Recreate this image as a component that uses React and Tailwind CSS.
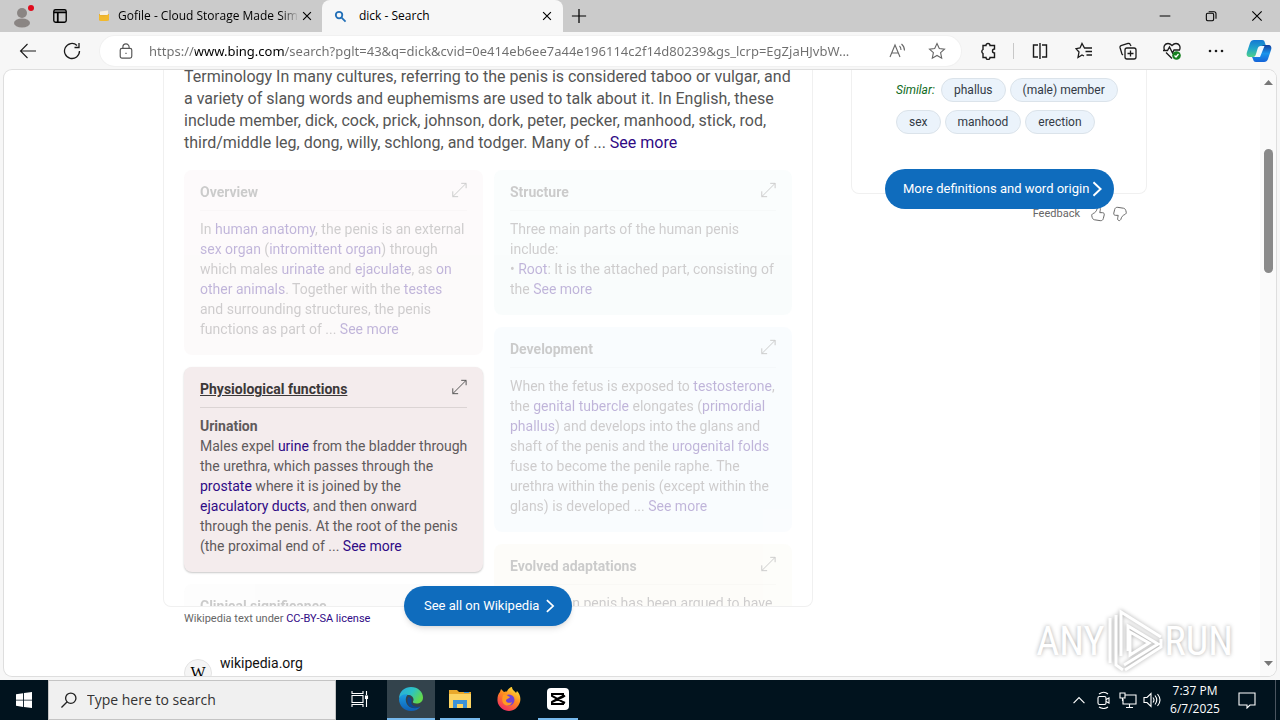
import React from "react";

const ui = "font-['Open_Sans','Noto_Sans',sans-serif]";

function Svg({ size = 18, className = "", children, ...rest }) {
  return (
    <svg width={size} height={size} viewBox="0 0 18 18" fill="none" stroke="currentColor" strokeWidth="1.1" aria-hidden="true" className={`shrink-0 ${className}`} {...rest}>
      {children}
    </svg>
  );
}

const Close = () => <Svg size={14} strokeWidth="1.5"><path d="M4 4l10 10M14 4L4 14" /></Svg>;

function IconButton({ label, children, className = "w-11" }) {
  return (
    <button aria-label={label} className={`flex h-8 shrink-0 items-center justify-center ${className}`}>
      {children}
    </button>
  );
}

function TabStrip() {
  return (
    <header className="flex h-8 shrink-0 bg-[#cbcbcb] text-black">
      <IconButton label="Profile">
        <Svg size={24} viewBox="0 0 24 24" stroke="none">
          <circle cx="12" cy="9" r="5" fill="#8a8583" />
          <ellipse cx="12" cy="19" rx="8" ry="4.500" fill="#8a8583" />
          <circle cx="21" cy="4" r="3" fill="#e00b1c" />
        </Svg>
      </IconButton>
      <IconButton label="Tab actions" className="w-8">
        <Svg size={16} strokeWidth="1.5"><rect x="2" y="2" width="14" height="14" rx="2" /><path d="M2 5h14M6.500 5v11" strokeWidth="2" /></Svg>
      </IconButton>
      <div role="tablist" className={`flex text-xs ${ui}`}>
        <div role="tab" aria-selected="false" className="ml-5 flex w-[226px] items-center pr-2">
          <Svg size={12} viewBox="0 0 12 12" stroke="none" className="ml-[2px]">
            <path d="M1 4h10v6.500H1z" fill="#e8b030" /><path d="M2 1.500l8-1V5H2z" fill="#f5efe2" /><path d="M1 5.500l5 1 5-2.500v5.500l-2 1.500H2.500L1 9z" fill="#f2b92c" />
          </Svg>
          <span className="ml-2 flex-1 overflow-hidden whitespace-nowrap mask-r-from-90%">Gofile - Cloud Storage Made Sim</span>
          <button aria-label="Close Gofile tab" className="ml-px"><Close /></button>
        </div>
        <div role="tab" aria-selected="true" className="flex w-[241px] items-center rounded-t-lg bg-[#f7f7f7] pr-[9px] pl-3">
          <Svg size={13} strokeWidth="2.500" className="text-[#2370b8]"><circle cx="7" cy="7" r="4.500" /><path d="M10.500 10.500l5.500 5.500" /></Svg>
          <span className="ml-3 flex-1">dick - Search</span>
          <button aria-label="Close search tab"><Close /></button>
        </div>
      </div>
      <IconButton label="New tab" className="w-8"><Svg size={16} strokeWidth="1.400"><path d="M9 1v16M1 9h16" /></Svg></IconButton>
      <div className="flex-1" />
      <IconButton label="Minimize" className="w-[46px]"><Svg size={12} strokeWidth="1.500"><path d="M1 9h16" /></Svg></IconButton>
      <IconButton label="Restore" className="w-[46px]">
        <Svg size={12} strokeWidth="1.600"><rect x="2" y="5" width="11" height="11" rx="2" /><path d="M5.500 2.500h8a3 3 0 0 1 3 3v7.500" /></Svg>
      </IconButton>
      <IconButton label="Close window" className="w-[46px]"><Svg size={12} strokeWidth="1.700"><path d="M2 2l14 14M16 2L2 16" /></Svg></IconButton>
    </header>
  );
}

const url = "https://www.bing.com/search?pglt=43&q=dick&cvid=0e414eb6ee7a44e196114c2f14d80239&gs_lcrp=EgZjaHJvbW...";

function Toolbar() {
  return (
    <nav className="flex h-[38px] shrink-0 items-center bg-[#f7f7f7] pl-[6px] text-[#1b1b1b]">
      <IconButton label="Back"><Svg><path d="M17 9H1.500M8.500 2L1.500 9l7 7" /></Svg></IconButton>
      <IconButton label="Refresh"><Svg strokeWidth="1.300"><path d="M16.500 9A7.500 7.500 0 1 1 14 3.400M16 1v4.500h-4.500" /></Svg></IconButton>
      <div className="ml-[6px] flex h-[30px] min-w-0 flex-1 items-center rounded-full bg-white pr-1 pl-[18px] ring-1 ring-[#f1f1f1]">
        <Svg size={16} className="text-[#555]" strokeWidth="1.300"><rect x="2.500" y="6" width="13" height="11" rx="2" /><path d="M5.500 6V4.500a3.500 3.500 0 0 1 7 0V6M9 11v1.500" /></Svg>
        <input
          aria-label="Address"
          readOnly
          value={url}
          className="ml-[15px] h-6 min-w-0 flex-1 bg-[linear-gradient(90deg,#6e6e6e_46px,#000_46px,#000_136px,#6e6e6e_136px)] bg-clip-text font-['Noto_Sans',sans-serif] text-[13px] text-transparent outline-none"
        />
        <IconButton label="Read aloud" className="w-10">
          <Svg className="text-[#666]"><path d="M2 15L7 3l5 12M4 11h6M11.500 4q1.500 1.500 1.500 4M13.500 2q3 2.500 3 6.500" /></Svg>
        </IconButton>
        <IconButton label="Add to favorites" className="w-10">
          <Svg className="text-[#666]"><path d="M9 1.500l2.300 5 5.200.6-3.900 3.600 1.100 5.500L9 13.500l-4.700 2.700 1.100-5.500L1.500 7.100l5.200-.6z" /></Svg>
        </IconButton>
      </div>
      <div className="flex items-center pl-2">
        <IconButton label="Extensions" className="w-10">
          <Svg strokeWidth="1.400"><path d="M6 3.500a2 2 0 0 1 4 0h4.500V7a2 2 0 0 0 0 4v4.500H10a2 2 0 0 1-4 0H3V11.500a2.300 2.300 0 0 1 0-4V3.500z" /></Svg>
        </IconButton>
        <span className="mx-1 h-4 w-px bg-[#c8c8c8]" />
        <IconButton label="Split screen"><Svg strokeWidth="1.400"><path d="M7 3H2.500v12H7M11 3h4.500v12H11M9 1v16" /></Svg></IconButton>
        <IconButton label="Favorites">
          <Svg strokeWidth="1.300"><path d="M12 6H9.500L7 1.500 5 6l-4 .700 3 3.300-1 5.500L7 13l2 1M11 6h6M10.500 9.500H17M11.500 13H17" /></Svg>
        </IconButton>
        <IconButton label="Collections">
          <Svg strokeWidth="1.300"><rect x="6" y="6" width="11" height="11" rx="2" /><path d="M11.500 8.500v6M8.500 11.500h6M4 13l-1-.8L1 5.500C.8 4.500 1.300 4 2 3.700L9 1.500c1-.2 1.800 0 2.200 1L12 4" /></Svg>
        </IconButton>
        <IconButton label="Browser essentials">
          <Svg strokeWidth="1.300"><path d="M1.500 8C0 4.500 2 1.500 5 1.500c2 0 3 1 4 2 1-1 2-2 4-2 3 0 5 3 3.500 6.500M0 8.500h4.500L6.500 5l3 6 1.500-3h6M3 10.500l6 6" /><circle cx="13.500" cy="13.500" r="4.300" fill="#16801f" stroke="none" /><path d="M11.500 13.500l1.500 1.500 2.500-3" stroke="#fff" /></Svg>
        </IconButton>
        <IconButton label="Settings and more"><Svg stroke="none" fill="currentColor"><circle cx="3" cy="9" r="1.300" /><circle cx="9" cy="9" r="1.300" /><circle cx="15" cy="9" r="1.300" /></Svg></IconButton>
        <IconButton label="Copilot" className="w-[42px]">
          <Svg size={26} viewBox="0 0 26 26" stroke="none">
            <defs>
              <linearGradient id="cpa" x1="0" y1="0" x2="0" y2="1"><stop offset="0" stopColor="#1478d4" /><stop offset=".5" stopColor="#22a5c9" /><stop offset="1" stopColor="#4fd08a" /></linearGradient>
              <linearGradient id="cpb" x1="0" y1="0" x2="0" y2="1"><stop offset="0" stopColor="#123f9e" /><stop offset=".5" stopColor="#1a94ec" /><stop offset="1" stopColor="#1463d8" /></linearGradient>
            </defs>
            <path d="M8 2h8c2 0 2.500 1 3 3l1 3h-5c-2 0-3 1-3.500 3l-1.500 5c-.5 2-1.500 3-3 3H4c-3 0-4-2-3-5l3-9c.7-2 2-3 4-3z" fill="url(#cpa)" />
            <path d="M18 24h-8c-2 0-2.500-1-3-3l-1-2h4c2 0 3-1 3.500-3L15 10c.5-2 1.500-3 3-3h4c3 0 4 2 3 5l-3 9c-.7 2-2 3-4 3z" fill="url(#cpb)" />
            <path d="M14.500 8h4l-4.500 11H9.500c1 0 1.800-1 2-2z" fill="#eef7ff" />
          </Svg>
        </IconButton>
      </div>
    </nav>
  );
}

const L = ({ children }) => <a href="#" className="text-[#2f0a85]">{children}</a>;

function Lines({ lines }) {
  return lines.map((line, i) => <React.Fragment key={i}>{line}<br /></React.Fragment>);
}

function Topic({ title, tone, active, lines }) {
  return (
    <article className={`rounded-lg px-4 pt-3 pb-4 text-sm leading-5 whitespace-nowrap text-[#5f5a5c] ${tone} ${active ? "shadow-[0_1px_2px_rgba(0,0,0,0.22)]" : "opacity-30"}`}>
      <div className={`flex justify-between border-b pb-2 ${active ? "border-black/10" : "border-black/5"}`}>
        <h3 className={`font-bold ${active ? "text-[#3c3838] underline" : "text-[#555]"}`}>{title}</h3>
        <button aria-label={`Expand ${title}`} className="flex h-4 items-center text-[#555]">
          <Svg size={16}><path d="M11.500 1.500h5.500v5.500M2 10.500v6h6M17 1.500l-15 15" /></Svg>
        </button>
      </div>
      <p className="pt-2"><Lines lines={lines} /></p>
    </article>
  );
}

const overview = [
  <>In <L>human anatomy</L>, the penis is an external</>,
  <><L>sex organ</L> (<L>intromittent organ</L>) through</>,
  <>which males <L>urinate</L> and <L>ejaculate</L>, as <L>on</L></>,
  <><L>other animals</L>. Together with the <L>testes</L></>,
  "and surrounding structures, the penis",
  <>functions as part of ... <L>See more</L></>,
];
const physiology = [
  <b>Urination</b>,
  <>Males expel <L>urine</L> from the bladder through</>,
  "the urethra, which passes through the",
  <><L>prostate</L> where it is joined by the</>,
  <><L>ejaculatory ducts</L>, and then onward</>,
  "through the penis. At the root of the penis",
  <>(the proximal end of ... <L>See more</L></>,
];
const structure = [
  "Three main parts of the human penis",
  "include:",
  <>• <L>Root</L>: It is the attached part, consisting of</>,
  <>the <L>See more</L></>,
];
const development = [
  <>When the fetus is exposed to <L>testosterone</L>,</>,
  <>the <L>genital tubercle</L> elongates (<L>primordial</L></>,
  <><L>phallus</L>) and develops into the glans and</>,
  <>shaft of the penis and the <L>urogenital folds</L></>,
  "fuse to become the penile raphe. The",
  "urethra within the penis (except within the",
  <>glans) is developed ... <L>See more</L></>,
];

const Chevron = ({ size = 14 }) => <Svg size={size} strokeWidth="2.200"><path d="M5 1.500L13 9l-8 7.500" /></Svg>;

function WikipediaAnswer() {
  return (
    <section className="w-[650px] shrink-0">
      <div className="relative">
        <div className="h-[537px] overflow-hidden rounded-b-lg border border-t-0 border-[#f0f0f0] px-5">
          <p className="-mt-1 text-base leading-[22px] whitespace-nowrap text-[#555]">
            <Lines lines={[
              "Terminology In many cultures, referring to the penis is considered taboo or vulgar, and",
              "a variety of slang words and euphemisms are used to talk about it. In English, these",
              "include member, dick, cock, prick, johnson, dork, peter, pecker, manhood, stick, rod,",
              <>third/middle leg, dong, willy, schlong, and todger. Many of ... <L>See more</L></>,
            ]} />
          </p>
          <div className="mt-4 grid grid-cols-2 items-start gap-3">
            <div className="grid gap-3">
              <Topic title="Overview" tone="bg-[#f8eff1]" lines={overview} />
              <Topic title="Physiological functions" tone="bg-[#f4eced]" active lines={physiology} />
              <Topic title="Clinical significance" tone="bg-[#f8f8f8]" lines={[" "]} />
            </div>
            <div className="grid gap-3">
              <Topic title="Structure" tone="bg-[#eef8f8]" lines={structure} />
              <Topic title="Development" tone="bg-[#edf6fd]" lines={development} />
              <Topic title="Evolved adaptations" tone="bg-[#f9f8ee]" lines={["The human penis has been argued to have"]} />
            </div>
          </div>
        </div>
        <a href="#" className="absolute -bottom-[19px] left-[241px] flex h-10 w-[168px] items-center gap-1 rounded-full bg-[#0f6cbd] pl-5 text-[13px] whitespace-nowrap text-white shadow-md">
          See all on Wikipedia <Chevron />
        </a>
      </div>
      <p className="mt-1 pl-[21px] text-[11px] leading-4 text-[#666]">Wikipedia text under <L>CC-BY-SA license</L></p>
      <div className="mt-[26px] flex gap-2 pl-[21px]">
        <span className="mt-[6px] flex size-7 items-center justify-center rounded-full border border-[#e3e3e3] bg-[#f5f5f5] font-['Liberation_Serif',serif] text-base text-black">W</span>
        <cite className="text-sm leading-5 text-[#111] not-italic">wikipedia.org</cite>
      </div>
    </section>
  );
}

const Chip = ({ children }) => (
  <a href="#" className="flex h-6 items-center rounded-full border border-[#dbe3ea] bg-[#ebf3fb] px-3 text-xs whitespace-nowrap text-[#333a45]">{children}</a>
);

const Thumb = ({ down }) => (
  <Svg size={16} className={down ? "rotate-180 text-[#666]" : "text-[#666]"}>
    <path d="M9.500 1.500c2 0 2.500 1.500 2 3.500L11 7.500h3c1.500 0 2.300 1 2 2.500l-1 4c-.4 1.700-1.500 2.700-3.500 2.500L5 15.500c-1.500-.3-2-1.200-2.500-2.500L2 11c-.3-1.200.5-2 1.500-2.500C6 7.500 7.500 5.500 8 3z" />
  </Svg>
);

function Dictionary() {
  return (
    <aside className="w-[296px] shrink-0">
      <div className="relative h-[124px] rounded-b-lg border border-t-0 border-[#f0f0f0] pt-2 pl-11">
        <div className="flex gap-1">
          <span className="flex w-[41px] items-center text-xs text-[#0f6b1c] italic">Similar:</span>
          <Chip>phallus</Chip><Chip>(male) member</Chip>
        </div>
        <div className="mt-2 flex gap-1"><Chip>sex</Chip><Chip>manhood</Chip><Chip>erection</Chip></div>
        <a href="#" className="absolute -bottom-4 left-[33px] flex h-10 w-[229px] items-center rounded-full bg-[#0f6cbd] pl-[18px] text-[13px] whitespace-nowrap text-white">
          More definitions and word origin <Chevron size={16} />
        </a>
      </div>
      <div className="mt-3 flex items-center justify-end gap-[6px] pr-[19px] text-[11px] leading-4 text-[#666]">
        <span className="mr-1">Feedback</span>
        <button aria-label="Like"><Thumb /></button>
        <button aria-label="Dislike"><Thumb down /></button>
      </div>
    </aside>
  );
}

function Watermark() {
  const word = "font-['Liberation_Sans_Narrow','Roboto_Condensed','Liberation_Sans',sans-serif] text-[40px] leading-none text-white [text-shadow:0_0_4px_#aaa]";
  return (
    <div className="absolute right-[43px] bottom-0 flex items-center">
      <span className={word}>ANY</span>
      <svg width="60" height="68" viewBox="0 0 60 68" fill="none" stroke="#fff" strokeWidth="3" className="drop-shadow-[0_0_2px_#aaa]" aria-hidden="true">
        <path d="M5 10v45M11 7v50l7 5" />
        <path d="M16 48V4l40 25M23 43V18l30 18-34 21M20 62l36-23v-8M25 24l19 11-19 12z" />
      </svg>
      <span className={word}>RUN</span>
    </div>
  );
}

function Taskbar() {
  const slot = "flex h-10 w-12 shrink-0 items-center justify-center border-b-2";
  return (
    <footer className={`flex h-10 shrink-0 bg-[#01131e] text-white ${ui}`}>
      <button aria-label="Start" className="flex w-12 items-center justify-center">
        <Svg size={16} stroke="none" fill="#fff"><path d="M0 2.500L8 1.400v7.200H0zM9 1.200L18 0v8.600H9zM0 9.600h8v7.200L0 15.600zM9 9.600h9V18l-9-1.200z" /></Svg>
      </button>
      <label className="flex w-72 items-center border border-[#c4c4c4] bg-[#f0f0f0] pl-3 text-[#222]">
        <Svg size={16} strokeWidth="1.500"><circle cx="11" cy="7" r="5.800" /><path d="M7 11l-6.500 6.500" /></Svg>
        <input aria-label="Search" placeholder="Type here to search" className="ml-[10px] min-w-0 flex-1 text-sm outline-none placeholder:text-[#333]" />
      </label>
      <button aria-label="Task view" className={`${slot} border-transparent`}>
        <Svg><path d="M1 1v2.500h11V1M1 17v-2.500h11V17M1 5.500h11v7H1zM15.500 1v4M15.500 9v8" /><rect x="14.500" y="6" width="2" height="2.500" fill="#fff" /></Svg>
      </button>
      <div className="ml-[3px] flex gap-px">
        <button aria-label="Microsoft Edge" className={`${slot} border-[#76b9ed] bg-[#33434c]`}>
          <svg width="24" height="24" viewBox="0 0 24 24" aria-hidden="true">
            <defs>
              <linearGradient id="eg" x1="0" y1="0" x2="1" y2=".5"><stop offset="0" stopColor="#2aa8e0" /><stop offset=".55" stopColor="#2cc3c4" /><stop offset="1" stopColor="#62d94c" /></linearGradient>
              <linearGradient id="eb" x1="0" y1="0" x2="0" y2="1"><stop offset="0" stopColor="#1b9de2" /><stop offset="1" stopColor="#0f5fb5" /></linearGradient>
            </defs>
            <path d="M0 12C0 4 6 0 12 0c7 0 12 5 12 10.500 0 4-3 6-6.500 6-2.500 0-4-1-3.500-2 1.500-2 0-6-4-6.500C5 7.500 1 9 0 12z" fill="url(#eg)" />
            <path d="M0 12c1-4 5-5.500 9-4.500C6 10 6 15 9 18.500c3 3.500 8 3.500 12.500 1C19.500 22.500 16 24 12 24 5 24 0 18.500 0 12z" fill="url(#eb)" />
            <path d="M9.500 10C7 13.500 9 19 13 20.500c3 1 6 .5 8.500-1-3 .8-7 .2-8.500-2-1-1.500-.5-3-.5-4.500 0-1-1-2.500-3-3z" fill="#0c4894" />
          </svg>
        </button>
        <div className="w-12 px-1">
          <button aria-label="File Explorer" className="flex h-10 w-10 items-center justify-center border-b-2 border-[#76b9ed]">
            <svg width="22" height="20" viewBox="0 0 22 20" aria-hidden="true"><path d="M0 1h8l2 2h12v16H0z" fill="#e9a92c" /><path d="M0 5h22v14H0z" fill="#fcd462" /><path d="M4 11h14v8h-4v-4H8v4H4z" fill="#3d93d8" /><path d="M15 3h5v1h-5z" fill="#3d93d8" /></svg>
          </button>
        </div>
        <button aria-label="Firefox" className={`${slot} border-transparent`}>
          <svg width="24" height="24" viewBox="0 0 24 24" aria-hidden="true">
            <defs><linearGradient id="ff" x1=".8" y1="0" x2=".2" y2="1"><stop offset="0" stopColor="#ffe63b" /><stop offset=".45" stopColor="#ff8a1e" /><stop offset="1" stopColor="#f0246a" /></linearGradient></defs>
            <path d="M3 5l1-3 3 3c1-.5 2-.5 3-.5C11 2 12.500.5 15 0c0 3 3 4 4 6l1-2c3 3 4 7 3 11-1.500 5-6 9-11 9S1 20 .5 14C.3 10 1 7 3 5z" fill="url(#ff)" />
            <circle cx="12" cy="13" r="5.500" fill="#7142d4" /><path d="M6 8c2-1 4 0 5 1l2 1c-1 2-4 1.500-4 4 1 2 4 2.500 6 1-1 4-6 5-9 1-1-2-1-5 0-8z" fill="#ff9b22" />
          </svg>
        </button>
        <div className="w-12 px-1">
          <button aria-label="CapCut" className="flex h-10 w-10 items-center justify-center border-b-2 border-[#76b9ed]">
            <svg width="22" height="22" viewBox="0 0 22 22" fill="none" stroke="#000" strokeWidth="2" aria-hidden="true"><rect width="22" height="22" rx="4" fill="#fff" stroke="none" /><path d="M18 7.500L16 9 5 14v2h11v-2L5 8V6h11v2l-11 6M16 14l2 1" /></svg>
          </button>
        </div>
      </div>
      <div className="flex-1" />
      <div className="flex items-center gap-[6px]">
        <IconButton label="Show hidden icons" className="w-5"><Svg size={14} strokeWidth="1.500"><path d="M2 13l7-7 7 7" /></Svg></IconButton>
        <IconButton label="Meet now" className="w-[18px]"><Svg size={18}><rect x="3" y="5.500" width="8" height="8" rx="1.500" /><path d="M11 8.500l3-1.500v5l-3-1.500M4 3q5-3.500 9 0M4 16q5 3 9 0" /></Svg></IconButton>
        <IconButton label="Network" className="w-[18px]"><Svg size={18}><path d="M6 4h11v9H4V8M7 16.500h7M10.500 13v3.500M1 2h5v5H1zM3.500 7v3" /></Svg></IconButton>
        <IconButton label="Volume" className="w-[18px]"><Svg size={18}><path d="M1 6.500h3l4-4v13l-4-4H1zM10 6.500q2 2.500 0 5M12 4.500q3.500 4.500 0 9M14.500 3q5 6 0 12" /></Svg></IconButton>
      </div>
      <div className="flex w-[68px] flex-col justify-center text-center text-xs leading-[18px] whitespace-nowrap"><span>7:37 PM</span><span>6/7/2025</span></div>
      <button aria-label="Notifications" className="flex w-9 items-center justify-center"><Svg><path d="M1 2h16v12h-5l-3 3v-3H1z" /></Svg></button>
      <span className="ml-[10px] w-[5px] border-l border-[#4a5560]" />
    </footer>
  );
}

export default function App() {
  return (
    <div className="flex h-screen flex-col overflow-hidden bg-[#f7f7f7] font-['Roboto',sans-serif]">
      <TabStrip />
      <Toolbar />
      <main className="relative mx-1 mb-1 flex min-h-0 flex-1 overflow-hidden rounded-lg bg-white ring-1 ring-[#dedede]">
        <div className="flex min-w-0 flex-1 items-start gap-[38px] overflow-hidden pl-[159px]">
          <WikipediaAnswer />
          <Dictionary />
        </div>
        <div className="flex w-4 shrink-0 flex-col items-center justify-between bg-[#fafafa] py-[9px]" aria-hidden="true">
          <svg width="9" height="6" viewBox="0 0 9 6" fill="#777"><path d="M0 6l4.500-5L9 6z" /></svg>
          <div className="flex flex-1 flex-col pt-[64px]"><span className="h-[124px] w-[9px] rounded-full bg-[#8a8a8a]" /></div>
          <svg width="9" height="6" viewBox="0 0 9 6" fill="#777"><path d="M0 0l4.500 5L9 0z" /></svg>
        </div>
        <Watermark />
      </main>
      <Taskbar />
    </div>
  );
}
